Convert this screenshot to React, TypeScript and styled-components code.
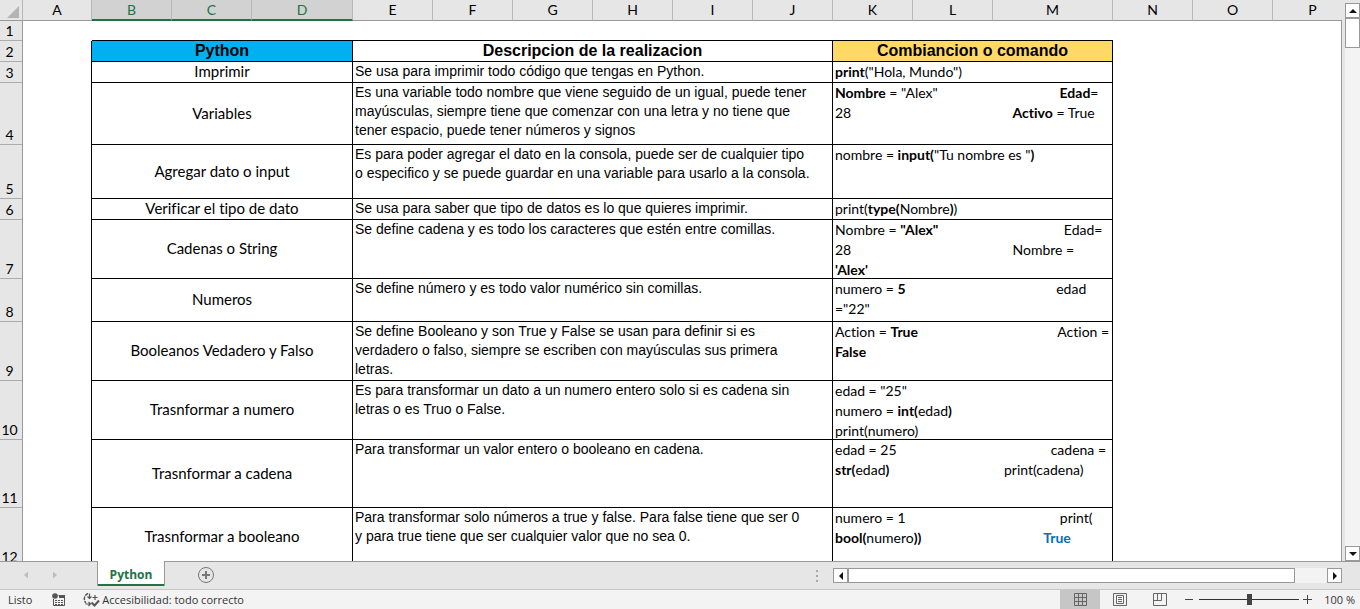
import React from "react";
import styled, { createGlobalStyle, css } from "styled-components";

const GlobalStyle = createGlobalStyle`
  *, *::before, *::after { box-sizing: border-box; }
  html, body { margin: 0; height: 100%; overflow: hidden; }
  button { font: inherit; color: inherit; padding: 0; border: 0; background: none; }
`;

const uiFont = `"Open Sans", "Noto Sans", sans-serif`;
const cellFont = `Lato, "Open Sans", sans-serif`;
const descFont = `"Liberation Sans", Arial, sans-serif`;

const Window = styled.div`
  display: flex;
  flex-direction: column;
  height: 100vh;
  background: #e6e6e6;
  color: #000;
  font-family: ${cellFont};
  font-variant-ligatures: none;
`;

const Workspace = styled.main`
  display: flex;
  flex: 1;
  min-height: 0;
  border-bottom: 1px solid #999;
`;

const SheetArea = styled.div`
  flex: 1;
  min-width: 0;
  overflow: hidden;
  background: #fff;
`;

const Sheet = styled.table`
  table-layout: fixed;
  width: 100%;
  min-width: 1353px;
  border-collapse: separate;
  border-spacing: 0;
  font-size: 14px;
  line-height: 20px;
`;

const Corner = styled.th`
  height: 21px;
  padding: 0;
  background: #e6e6e6;
  border-right: 1px solid #b8b8b8;
  border-bottom: 1px solid #999;
  svg { display: block; margin: 2px 0 0 6px; }
`;

const ColHead = styled.th<{ $on?: boolean }>`
  height: 21px;
  padding: 0;
  font-weight: 400;
  line-height: 18px;
  background: #e6e6e6;
  border-right: 1px solid #b8b8b8;
  border-bottom: 1px solid #999;
  ${(p) => p.$on && css`
    color: #217346;
    background: #d2d2d2;
    border-bottom: 2px solid #217346;
  `}
`;

const RowHead = styled.th`
  padding: 0 3px 0 0;
  font-weight: 400;
  line-height: 18px;
  vertical-align: bottom;
  background: #e6e6e6;
  border-right: 1px solid #999;
  border-bottom: 1px solid #ababab;
`;

const Blank = styled.td<{ $right?: boolean; $bottom?: boolean }>`
  padding: 0;
  border-right: ${(p) => (p.$right ? "1px solid #000" : "0")};
  border-bottom: ${(p) => (p.$bottom ? "1px solid #000" : "0")};
`;

const Cell = styled.td`
  padding: 0;
  border-right: 1px solid #000;
  border-bottom: 1px solid #000;
`;

const TitleCell = styled(Cell)<{ $fill: string }>`
  background: ${(p) => p.$fill};
  font: 700 16px/20px ${descFont};
  text-align: center;
`;

const Topic = styled(Cell)`
  padding-bottom: 2px;
  font-size: 15px;
  line-height: 18px;
  text-align: center;
`;

const Description = styled(Cell)`
  padding-left: 2px;
  vertical-align: top;
  font: 400 14px/19px ${descFont};
  white-space: pre-line;
`;

const CodeCell = styled(Cell)`
  vertical-align: top;
`;

const Code = styled.div<{ $height: number }>`
  max-height: ${(p) => p.$height}px;
  padding-left: 2px;
  overflow: hidden;
  white-space: pre;
`;

const Blue = styled.b`
  color: #0070c0;
`;

const VScroll = styled.aside`
  display: flex;
  gap: 3px;
`;

const Edge = styled.div`
  width: 1px;
  margin-top: 20px;
  background: #999;
`;

const VTrack = styled.div`
  display: flex;
  flex-direction: column;
  width: 15px;
  margin-top: 3px;
  background: #f3f3f3;
`;

const ArrowButton = styled.button`
  display: grid;
  place-items: center;
  flex: none;
  width: 15px;
  height: 15px;
  background: #fff;
  border: 1px solid #999;
`;

const VThumb = styled.div`
  height: 30px;
  background: #fff;
  border: 1px solid #999;
`;

const Grow = styled.div`
  flex: 1;
`;

const TabBar = styled.nav`
  display: flex;
  align-items: flex-start;
  height: 28px;
  padding-right: 18px;
  border-bottom: 1px solid #c6c6c6;
`;

const SheetNav = styled.div`
  display: flex;
  gap: 22px;
  width: 97px;
  padding: 9px 0 0 23px;
`;

const NavButton = styled.button`
  display: block;
  width: 7px;
  height: 8px;
  svg { display: block; }
`;

const SheetTab = styled.button`
  z-index: 1;
  width: 68px;
  height: 25px;
  margin-top: -1px;
  background: #fff;
  border: solid #999;
  border-width: 0 1px;
  box-shadow: inset 0 -2px #217346;
  color: #217346;
  font: 700 12px/27px ${uiFont};
`;

const AddButton = styled.button`
  margin: 5px 0 0 32px;
  width: 18px;
  height: 18px;
  svg { display: block; }
`;

const Grip = styled.div`
  display: flex;
  flex-direction: column;
  gap: 3px;
  margin: 8px 15px 0 0;
`;

const Dot = styled.i`
  width: 2px;
  height: 2px;
  background: #a6a6a6;
`;

const HScroll = styled.div`
  display: flex;
  flex: 0 1 509px;
  margin-top: 6px;
  background: #f3f3f3;
`;

const HThumb = styled.div`
  flex: 1;
  height: 15px;
  margin-right: 32px;
  background: #fff;
  border: 1px solid #999;
`;

const StatusBar = styled.footer`
  display: flex;
  align-items: center;
  height: 19px;
  padding: 0 5px 0 8px;
  background: #f3f3f3;
  color: #333;
  font: 400 11px/19px ${uiFont};
`;

const MacroButton = styled.button`
  width: 14px;
  height: 14px;
  margin-left: 20px;
  svg { display: block; }
`;

const StatusItem = styled.button`
  display: flex;
  align-items: center;
  gap: 2px;
  margin-left: 17px;
`;

const ViewButton = styled.button<{ $on?: boolean }>`
  display: grid;
  place-items: center;
  width: 40px;
  height: 19px;
  background: ${(p) => (p.$on ? "#c6c6c6" : "transparent")};
`;

const ZoomGroup = styled.div`
  display: flex;
  align-items: center;
  margin-left: 5px;
`;

const ZoomButton = styled.button`
  width: 9px;
  height: 19px;
  svg { display: block; }
`;

const ZoomSlider = styled.input`
  appearance: none;
  width: 100px;
  height: 11px;
  margin: 0 4px 0 5px;
  background: linear-gradient(#333, #333) center / 100% 1px no-repeat;
  &::-webkit-slider-thumb {
    appearance: none;
    width: 5px;
    height: 11px;
    background: #444;
  }
`;

const ZoomValue = styled.span`
  width: 33px;
  margin-left: 10px;
  text-align: right;
  white-space: nowrap;
`;

const columns: { name: string; width?: number }[] = [
  { name: "A", width: 69 },
  { name: "B", width: 80 },
  { name: "C", width: 80 },
  { name: "D", width: 101 },
  ...["E", "F", "G", "H", "I", "J", "K", "L"].map((name) => ({ name, width: 80 })),
  { name: "M", width: 120 },
  { name: "N", width: 80 },
  { name: "O", width: 80 },
  { name: "P" },
];

const sp = (count: number) => " ".repeat(count);

type Row = { height: number; topic: string; text: string; code: React.ReactNode };

const rows: Row[] = [
  {
    height: 21,
    topic: "Imprimir",
    text: "Se usa para imprimir todo código que tengas en Python.",
    code: <><b>print</b>("Hola, Mundo")</>,
  },
  {
    height: 62,
    topic: "Variables",
    text: "Es una variable todo nombre que viene seguido de un igual, puede tener\nmayúsculas, siempre tiene que comenzar con una letra y no tiene que\ntener espacio, puede tener números y signos",
    code: <><b>Nombre</b> = "Alex"{sp(34)}<b>Edad</b>={"\n"}28{sp(45)}<b>Activo</b> = True</>,
  },
  {
    height: 54,
    topic: "Agregar dato o input",
    text: "Es para poder agregar el dato en la consola, puede ser de cualquier tipo\no especifico y se puede guardar en una variable para usarlo a la consola.",
    code: <>nombre = <b>input(</b>"Tu nombre es "<b>)</b></>,
  },
  {
    height: 21,
    topic: "Verificar el tipo de dato",
    text: "Se usa para saber que tipo de datos es lo que quieres imprimir.",
    code: <>print(<b>type(</b>Nombre<b>)</b>)</>,
  },
  {
    height: 59,
    topic: "Cadenas o String",
    text: "Se define cadena y es todo los caracteres que estén entre comillas.",
    code: <>Nombre = <b>"Alex"</b>{sp(35)}Edad={"\n"}28{sp(45)}Nombre ={"\n"}<b>'Alex'</b></>,
  },
  {
    height: 43,
    topic: "Numeros",
    text: "Se define número y es todo valor numérico sin comillas.",
    code: <>numero = <b>5</b>{sp(42)}edad{"\n"}="22"</>,
  },
  {
    height: 59,
    topic: "Booleanos Vedadero y Falso",
    text: "Se define Booleano y son True y False se usan para definir si es\nverdadero o falso, siempre se escriben con mayúsculas sus primera\nletras.",
    code: <>Action = <b>True</b>{sp(39)}Action ={"\n"}<b>False</b></>,
  },
  {
    height: 59,
    topic: "Trasnformar a numero",
    text: "Es para transformar un dato a un numero entero solo si es cadena sin\nletras o es Truo o False.",
    code: <>edad = "25"{"\n"}numero = <b>int(</b>edad<b>)</b>{"\n"}print(numero)</>,
  },
  {
    height: 68,
    topic: "Trasnformar a cadena",
    text: "Para transformar un valor entero o booleano en cadena.",
    code: <>edad = 25{sp(43)}cadena ={"\n"}<b>str(</b>edad<b>)</b>{sp(32)}print(cadena)</>,
  },
  {
    height: 59,
    topic: "Trasnformar a booleano",
    text: "Para transformar solo números a true y false. Para false tiene que ser 0\ny para true tiene que ser cualquier valor que no sea 0.",
    code: <>numero = 1{sp(43)}print({"\n"}<b>bool(</b>numero<b>))</b>{sp(34)}<Blue>True</Blue></>,
  },
];

const Arrow = ({ d, w, h }: { d: string; w: number; h: number }) => (
  <svg width={w} height={h} viewBox={`0 0 ${w} ${h}`}><path d={d} fill="#111" /></svg>
);

export default function App() {
  return (
    <Window>
      <GlobalStyle />
      <Workspace>
        <SheetArea>
          <Sheet>
            <colgroup>
              <col width={23} />
              {columns.map((c) => <col key={c.name} width={c.width} />)}
            </colgroup>
            <thead>
              <tr>
                <Corner>
                  <svg width="13" height="16" viewBox="0 0 13 16"><path d="M13 3V15H1z" fill="#b4b4b4" /></svg>
                </Corner>
                {columns.map((c) => (
                  <ColHead key={c.name} scope="col" $on={"BCD".includes(c.name)}>{c.name}</ColHead>
                ))}
              </tr>
            </thead>
            <tbody>
              <tr style={{ height: 20 }}>
                <RowHead scope="row">1</RowHead>
                <Blank />
                <Blank $bottom colSpan={12} />
                <Blank colSpan={3} />
              </tr>
              <tr style={{ height: 21 }}>
                <RowHead scope="row">2</RowHead>
                <Blank $right />
                <TitleCell $fill="#00b0f0" colSpan={3}>Python</TitleCell>
                <TitleCell $fill="#fff" colSpan={6}>Descripcion de la realizacion</TitleCell>
                <TitleCell $fill="#ffd966" colSpan={3}>Combiancion o comando</TitleCell>
                <Blank colSpan={3} />
              </tr>
              {rows.map((row, i) => (
                <tr key={row.topic} style={{ height: row.height }}>
                  <RowHead scope="row">{i + 3}</RowHead>
                  <Blank $right />
                  <Topic colSpan={3}>{row.topic}</Topic>
                  <Description colSpan={6}>{row.text}</Description>
                  <CodeCell colSpan={3}><Code $height={row.height - 1}>{row.code}</Code></CodeCell>
                  <Blank colSpan={3} />
                </tr>
              ))}
            </tbody>
          </Sheet>
        </SheetArea>
        <VScroll>
          <Edge />
          <VTrack>
            <ArrowButton aria-label="Subir"><Arrow w={8} h={4} d="M0 4L4 0L8 4z" /></ArrowButton>
            <VThumb />
            <Grow />
            <ArrowButton aria-label="Bajar"><Arrow w={8} h={4} d="M0 0L4 4L8 0z" /></ArrowButton>
          </VTrack>
        </VScroll>
      </Workspace>

      <TabBar>
        <SheetNav>
          <NavButton aria-label="Hoja anterior">
            <svg width="6" height="8" viewBox="0 0 6 8"><path d="M5 0.500V7.500L1 4z" fill="#bdbdbd" /></svg>
          </NavButton>
          <NavButton aria-label="Hoja siguiente">
            <svg width="6" height="8" viewBox="0 0 6 8"><path d="M1 0.500V7.500L5 4z" fill="#bdbdbd" /></svg>
          </NavButton>
        </SheetNav>
        <SheetTab>Python</SheetTab>
        <AddButton aria-label="Hoja nueva">
          <svg width="18" height="18" viewBox="0 0 18 18" fill="none" stroke="#777">
            <circle cx="9" cy="8" r="7.500" />
            <path d="M9 4V12M5 8H13" strokeWidth="2" />
          </svg>
        </AddButton>
        <Grow />
        <Grip><Dot /><Dot /><Dot /></Grip>
        <HScroll>
          <ArrowButton aria-label="Izquierda"><Arrow w={4} h={8} d="M4 0L0 4L4 8z" /></ArrowButton>
          <HThumb />
          <ArrowButton aria-label="Derecha"><Arrow w={4} h={8} d="M0 0L4 4L0 8z" /></ArrowButton>
        </HScroll>
      </TabBar>

      <StatusBar>
        <span>Listo</span>
        <MacroButton aria-label="Grabar macro">
          <svg width="14" height="14" viewBox="0 0 14 14">
            <path d="M6.500 2.500H12.500V12.500H1.500V6" fill="none" stroke="#555" />
            <path d="M7 2H13V5H7z" fill="#555" />
            <circle cx="3" cy="3" r="2.800" fill="#555" />
            <path d="M3 7.500H5M6 7.500H8M9 7.500H11M3 9.500H5M6 9.500H8M9 9.500H11M3 11.500H5M6 11.500H8M9 11.500H11" stroke="#555" />
          </svg>
        </MacroButton>
        <StatusItem>
          <svg width="17" height="15" viewBox="0 0 17 15" fill="none" stroke="#555">
            <path d="M5 1.500A5.800 5.800 0 0 0 3 11" strokeWidth="1.500" strokeDasharray="3.500 1" />
            <path d="M2.500 12H7.500M5.500 10L7.500 12L5.500 14" strokeWidth="1.200" />
            <path d="M6.500 1.500V6.500M4.500 4.500L6.500 6.500L8.500 4.500" strokeWidth="1.200" />
            <path d="M9.500 5.500H14.500M12 3V8" strokeWidth="1.200" />
            <path d="M8.500 10.500L11.500 13.500L16 8.500" strokeWidth="2" />
          </svg>
          Accesibilidad: todo correcto
        </StatusItem>
        <Grow />
        <ViewButton $on aria-label="Normal">
          <svg width="13" height="13" viewBox="0 0 13 13" fill="none" stroke="#666">
            <path d="M0.500 0.500H12.500V12.500H0.500zM4.500 0V13M8.500 0V13M0 4.500H13M0 8.500H13" />
          </svg>
        </ViewButton>
        <ViewButton aria-label="Diseño de página">
          <svg width="14" height="13" viewBox="0 0 14 13" fill="none" stroke="#666">
            <path d="M0.500 0.500H13.500V12.500H0.500zM3.500 2.500H10.500V10.500H3.500zM5 4.500H9M5 6.500H9M5 8.500H9" />
          </svg>
        </ViewButton>
        <ViewButton aria-label="Vista previa de salto de página">
          <svg width="14" height="13" viewBox="0 0 14 13" fill="none" stroke="#666">
            <path d="M0.500 0.500H13.500V12.500H0.500zM0.500 7.500H8.500V0.500M4.500 0.500V7.500" />
          </svg>
        </ViewButton>
        <ZoomGroup>
          <ZoomButton aria-label="Alejar">
            <svg width="9" height="19" viewBox="0 0 9 19"><path d="M0 9.500H8" stroke="#444" /></svg>
          </ZoomButton>
          <ZoomSlider type="range" min={0} max={200} defaultValue={100} aria-label="Zoom" />
          <ZoomButton aria-label="Acercar">
            <svg width="9" height="19" viewBox="0 0 9 19"><path d="M0 9.500H9M4.500 5V14" stroke="#444" /></svg>
          </ZoomButton>
          <ZoomValue>100 %</ZoomValue>
        </ZoomGroup>
      </StatusBar>
    </Window>
  );
}
